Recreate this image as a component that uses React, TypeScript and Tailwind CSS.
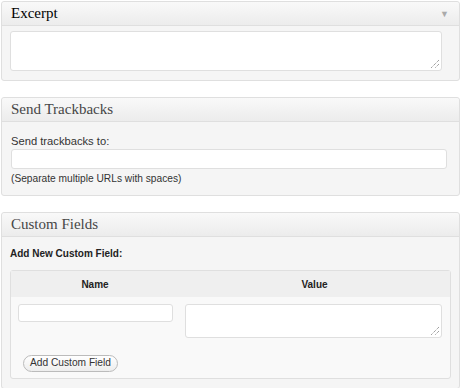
import React from 'react';

const sans = "font-['Liberation_Sans',Arial,sans-serif]";

const Panel: React.FC<{ title: string; dark?: boolean; arrow?: boolean; children: React.ReactNode }> = ({
  title,
  dark,
  arrow,
  children,
}) => (
  <div className="w-[459px] rounded-[3px] border border-[#dfdfdf] bg-[#f5f5f5]">
    <div className="flex h-[24px] items-center justify-between rounded-t-[3px] border-b border-[#dfdfdf] bg-gradient-to-b from-[#f9f9f9] to-[#ececec] pl-[9px] pr-[10px]">
      <span
        className={`font-['Liberation_Serif',Georgia,serif] text-[15px] leading-none ${dark ? 'text-black' : 'text-[#464646]'}`}
      >
        {title}
      </span>
      {arrow && <span className="mt-[1px] text-[9px] leading-none text-[#aaa]">▼</span>}
    </div>
    {children}
  </div>
);

const Grip = () => (
  <svg className="absolute bottom-[2px] right-[2px]" width="9" height="9" viewBox="0 0 9 9">
    <path d="M9 1 L1 9 M9 5 L5 9" stroke="#777" strokeWidth="1" strokeDasharray="1 1" />
  </svg>
);

export default function App() {
  return (
    <div className={`flex flex-col gap-[16px] pl-[1px] pt-[1px] ${sans}`}>
      <Panel title="Excerpt" dark arrow>
        <div className="pb-[9px] pl-[8px] pt-[5px]">
          <div className="relative h-[40px] w-[432px] rounded-[3px] border border-[#dfdfdf] bg-white">
            <Grip />
          </div>
        </div>
      </Panel>

      <Panel title="Send Trackbacks">
        <div className="pb-[8px] pl-[9px] pt-[11px] text-[#333]">
          <div className="text-[11.2px] leading-[16px]">Send trackbacks to:</div>
          <div className="h-[20px] w-[436px] rounded-[3px] border border-[#dfdfdf] bg-white" />
          <div className="mt-[2px] text-[10.2px] leading-[16px]">(Separate multiple URLs with spaces)</div>
        </div>
      </Panel>

      <Panel title="Custom Fields">
        <div className="pb-[9px] pl-[8px] pt-[9px] text-[#222]">
          <div className="text-[10px] font-bold leading-[16px]">Add New Custom Field:</div>
          <div className="mt-[8px] w-[441px] rounded-[3px] border border-[#dfdfdf] bg-[#f9f9f9]">
            <div className="grid h-[26px] grid-cols-[168px_1fr] items-center bg-[#efefef] text-[10px] font-bold">
              <div className="text-center">Name</div>
              <div className="text-center">Value</div>
            </div>
            <div className="flex items-start gap-[12px] pl-[7px] pt-[7px]">
              <div className="h-[18px] w-[155px] rounded-[3px] border border-[#dfdfdf] bg-white" />
              <div className="relative h-[34px] w-[257px] rounded-[3px] border border-[#dfdfdf] bg-white">
                <Grip />
              </div>
            </div>
            <div className="pb-[5px] pl-[12px] pt-[11px]">
              <button className="h-[17px] rounded-full border border-[#bbb] bg-gradient-to-b from-white to-[#ededed] px-[6px] text-[10.2px] leading-none text-[#333]">
                Add Custom Field
              </button>
            </div>
          </div>
        </div>
      </Panel>
    </div>
  );
}
